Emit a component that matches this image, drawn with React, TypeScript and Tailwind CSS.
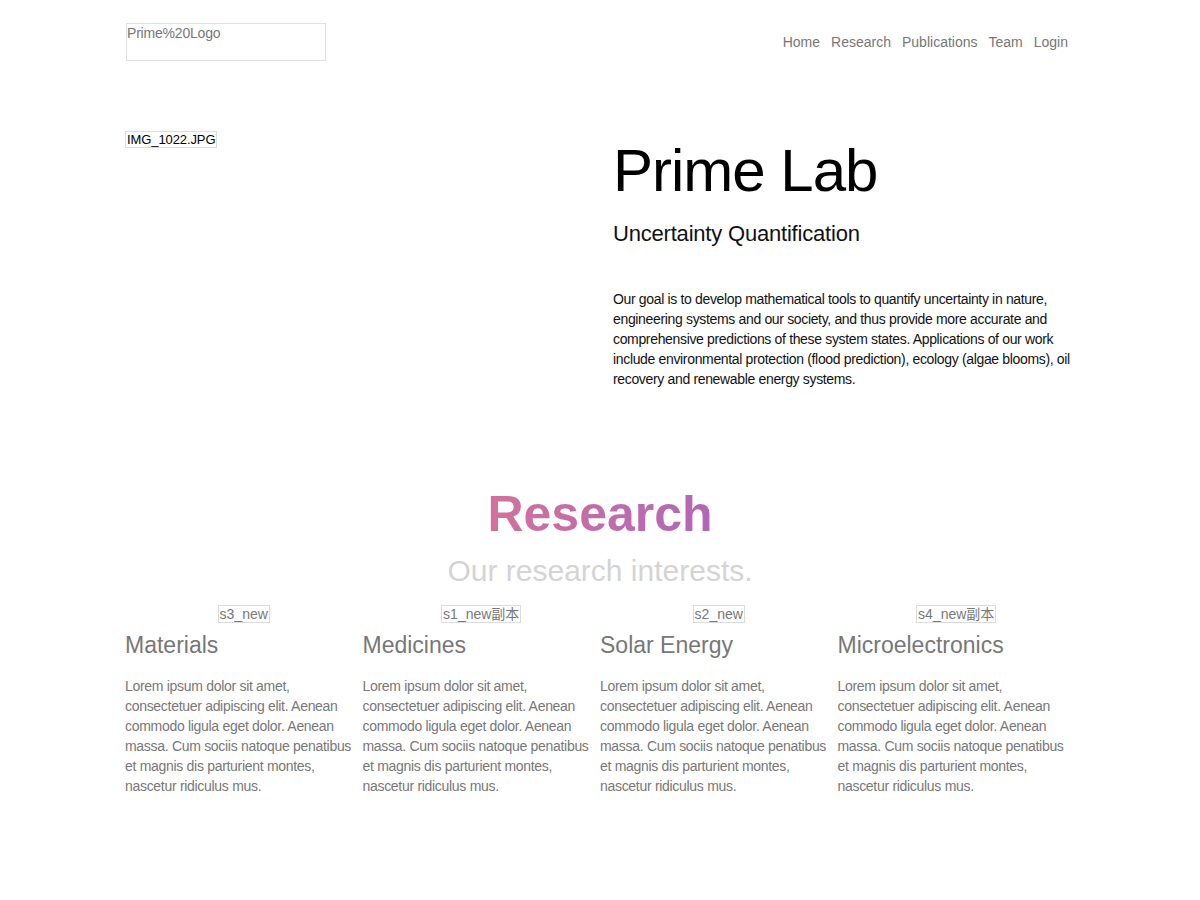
import React from "react";

const research = [
  { img: "s3_new", title: "Materials" },
  { img: "s1_new副本", title: "Medicines" },
  { img: "s2_new", title: "Solar Energy" },
  { img: "s4_new副本", title: "Microelectronics" },
];

const lorem =
  "Lorem ipsum dolor sit amet, consectetuer adipiscing elit. Aenean commodo ligula eget dolor. Aenean massa. Cum sociis natoque penatibus et magnis dis parturient montes, nascetur ridiculus mus.";

function BrokenImg({ alt, className = "" }: { alt: string; className?: string }) {
  return (
    <span className={`inline-block border border-[#dcdcdc] px-px ${className}`}>{alt}</span>
  );
}

export default function App() {
  return (
    <div
      className="min-h-[900px] bg-white"
      style={{ fontFamily: '"Liberation Sans", "Noto Sans CJK SC", Arial, sans-serif' }}
    >
      <div className="w-[950px] mx-auto">
        {/* header */}
        <header className="pt-[23px] flex items-center justify-between">
          <div className="ml-px w-[200px] h-[38px] border border-[#e0e0e0] text-[14px] leading-[18px] tracking-[-0.2px] text-[#777]">
            Prime%20Logo
          </div>
          <nav className="flex gap-[11px] pr-[7px] text-[14px] text-[#777]">
            <a>Home</a>
            <a>Research</a>
            <a>Publications</a>
            <a>Team</a>
            <a>Login</a>
          </nav>
        </header>

        {/* hero */}
        <section className="mt-[66px] grid grid-cols-[488px_1fr]">
          <div>
            <BrokenImg alt="IMG_1022.JPG" className="text-black text-[13px] leading-[15px] tracking-[-0.1px]" />
          </div>
          <div>
            <h1 className="mt-[14px] text-[60px] leading-none tracking-[-1px] text-black">
              Prime Lab
            </h1>
            <h2 className="mt-[20px] text-[22px] leading-[26px] tracking-[-0.2px] text-[#111]">
              Uncertainty Quantification
            </h2>
            <p className="mt-[42px] text-[14px] leading-[20px] tracking-[-0.34px] text-[#111] w-[465px]">
              Our goal is to develop mathematical tools to quantify uncertainty in nature,
              engineering systems and our society, and thus provide more accurate and
              comprehensive predictions of these system states. Applications of our work
              include environmental protection (flood prediction), ecology (algae blooms), oil
              recovery and renewable energy systems.
            </p>
          </div>
        </section>

        {/* research */}
        <section className="mt-[100px] text-center">
          <h2 className="text-[50px] leading-none font-bold bg-gradient-to-r from-[#d2729a] to-[#b066b8] bg-clip-text text-transparent inline-block">
            Research
          </h2>
          <p className="mt-[17px] text-[30px] leading-none text-[#d4d4d4]">
            Our research interests.
          </p>
        </section>

        <section className="mt-[16px] grid grid-cols-4 pb-[100px]">
          {research.map((r) => (
            <div key={r.title}>
              <div className="text-center">
                <BrokenImg alt={r.img} className="text-[#777] text-[14px] leading-[16px]" />
              </div>
              <h3 className="mt-[5px] text-[23px] leading-[28px] text-[#777]">{r.title}</h3>
              <p className="mt-[17px] text-[14px] leading-[20px] tracking-[-0.3px] text-[#777]">
                {lorem}
              </p>
            </div>
          ))}
        </section>
      </div>
    </div>
  );
}
